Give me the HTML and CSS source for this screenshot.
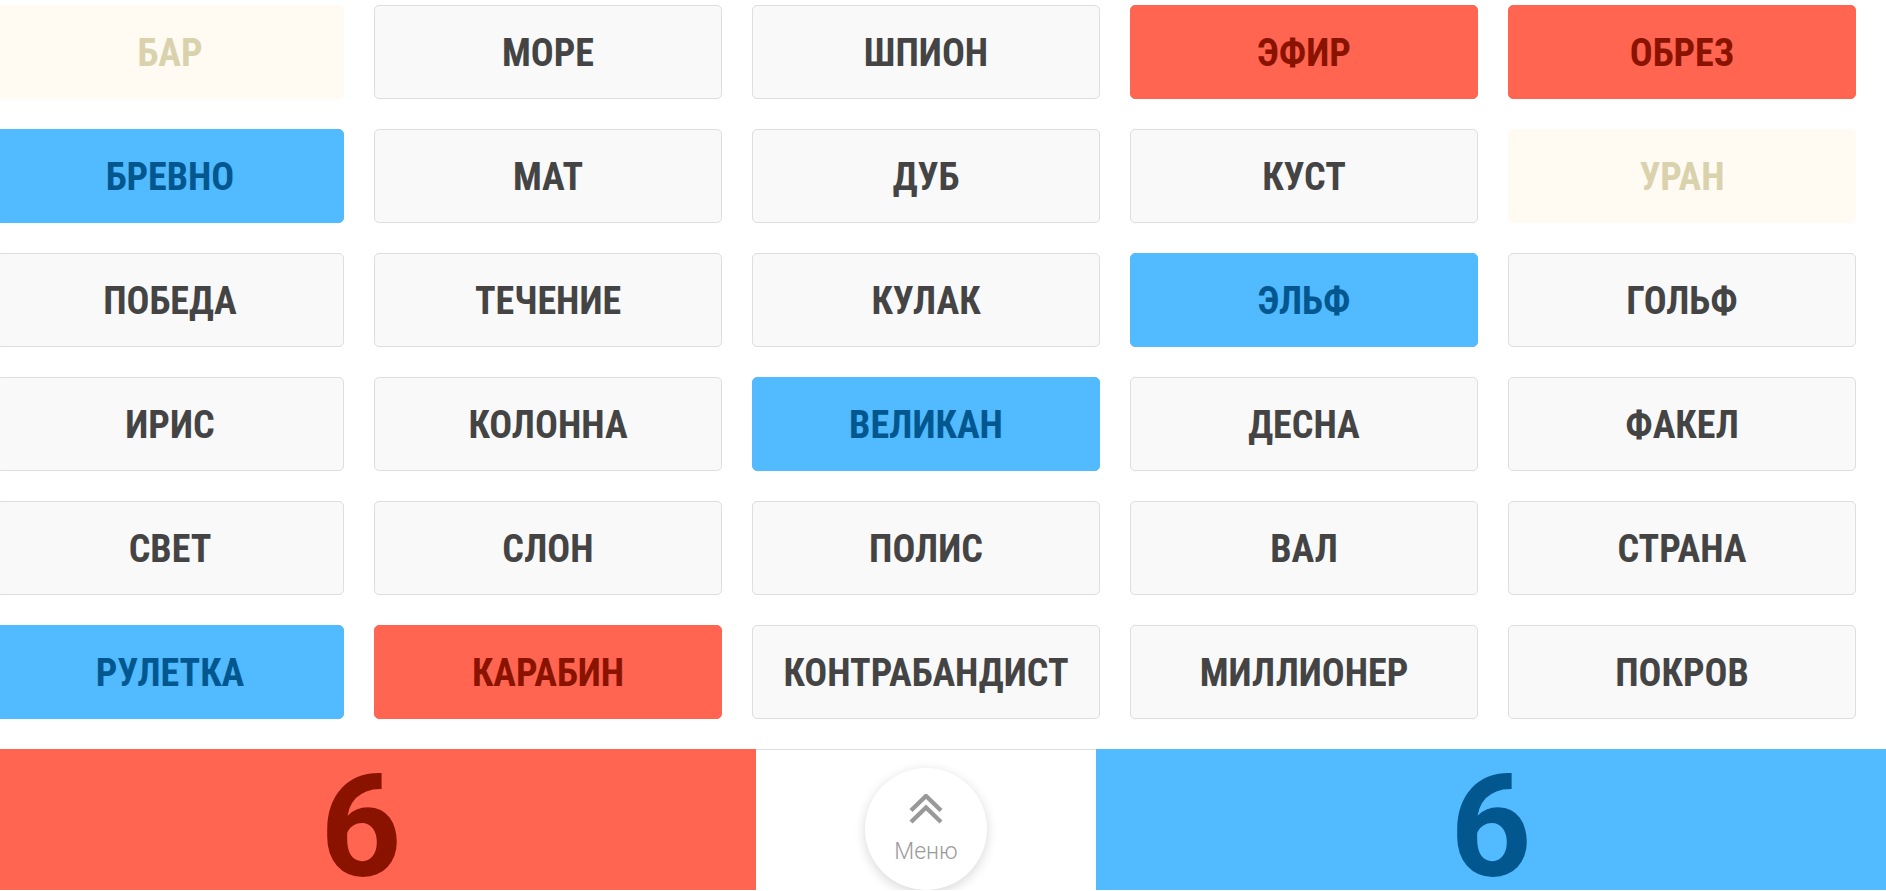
FILE: index.html
```html
<!DOCTYPE html>
<html lang="ru">
<head>
<meta charset="utf-8">
<title>Игра</title>
<link rel="stylesheet" href="styles.css">
</head>
<body>
<div class="page">
  <div class="board">
    <div class="card card-neutral">Бар</div>
    <div class="card card-plain">Море</div>
    <div class="card card-plain">Шпион</div>
    <div class="card card-red">Эфир</div>
    <div class="card card-red">Обрез</div>

    <div class="card card-blue">Бревно</div>
    <div class="card card-plain">Мат</div>
    <div class="card card-plain">Дуб</div>
    <div class="card card-plain">Куст</div>
    <div class="card card-neutral">Уран</div>

    <div class="card card-plain">Победа</div>
    <div class="card card-plain">Течение</div>
    <div class="card card-plain">Кулак</div>
    <div class="card card-blue">Эльф</div>
    <div class="card card-plain">Гольф</div>

    <div class="card card-plain">Ирис</div>
    <div class="card card-plain">Колонна</div>
    <div class="card card-blue">Великан</div>
    <div class="card card-plain">Десна</div>
    <div class="card card-plain">Факел</div>

    <div class="card card-plain">Свет</div>
    <div class="card card-plain">Слон</div>
    <div class="card card-plain">Полис</div>
    <div class="card card-plain">Вал</div>
    <div class="card card-plain">Страна</div>

    <div class="card card-blue">Рулетка</div>
    <div class="card card-red">Карабин</div>
    <div class="card card-plain">Контрабандист</div>
    <div class="card card-plain">Миллионер</div>
    <div class="card card-plain">Покров</div>
  </div>

  <div class="score-bar">
    <div class="score score-red">6</div>
    <div class="menu-area">
      <button class="menu-btn" type="button">
        <svg class="menu-icon" width="34" height="33" viewBox="0 0 34 33" aria-hidden="true">
          <path d="M2 16.5 L17 2 L32 16.5" fill="none" stroke="#999999" stroke-width="4.4"/>
          <path d="M2 28 L17 13.5 L32 28" fill="none" stroke="#999999" stroke-width="4.4"/>
        </svg>
        <span class="menu-label">Меню</span>
      </button>
    </div>
    <div class="score score-blue">6</div>
  </div>
</div>
</body>
</html>
```

FILE: styles.css
```css
html, body {
  margin: 0;
  padding: 0;
  background: #ffffff;
  overflow: hidden;
}

body {
  font-family: "Roboto Condensed", Roboto, "Liberation Sans", sans-serif;
}

.page {
  width: 1920px;
  margin-left: -34px;
}

.board {
  display: grid;
  grid-template-columns: repeat(5, 348px);
  grid-auto-rows: 94px;
  gap: 30px;
  padding: 5px 30px 30px;
}

.card {
  box-sizing: border-box;
  border: 1px solid transparent;
  border-radius: 5px;
  display: flex;
  align-items: center;
  justify-content: center;
  font-size: 38px;
  font-weight: 700;
  text-transform: uppercase;
  padding-top: 1px;
}

.card-plain {
  background: #f9f9f9;
  border-color: #dedede;
  color: #444444;
}

.card-neutral {
  background: #fffbf3;
  border-color: #fffbf3;
  color: #dad1ad;
}

.card-red {
  background: #ff6550;
  border-color: #ff6550;
  color: #8a1300;
}

.card-blue {
  background: #52baff;
  border-color: #52baff;
  color: #02578f;
}

.score-bar {
  display: flex;
  height: 141px;
  overflow: hidden;
}

.score {
  width: 790px;
  box-sizing: border-box;
  padding-top: 8px;
  text-align: center;
  font-family: Roboto, "Liberation Sans", sans-serif;
  font-size: 142px;
  font-weight: 700;
  line-height: 142px;
}

.score-red {
  background: #ff6550;
  color: #8a1300;
}

.score-blue {
  background: #52baff;
  color: #02578f;
}

.menu-area {
  width: 340px;
  box-sizing: border-box;
  border-top: 1px solid #dddddd;
  background: #ffffff;
  display: flex;
  justify-content: center;
}

.menu-btn {
  margin-top: 18px;
  width: 122px;
  height: 122px;
  flex-shrink: 0;
  border-radius: 50%;
  border: none;
  background: #ffffff;
  box-shadow: 0 3px 12px rgba(0, 0, 0, 0.16);
  display: flex;
  flex-direction: column;
  align-items: center;
  padding: 26px 0 0;
  cursor: pointer;
}

.menu-icon {
  display: block;
}

.menu-label {
  margin-top: 13px;
  font-family: Roboto, "Liberation Sans", sans-serif;
  font-weight: 300;
  font-size: 23px;
  line-height: 24px;
  color: #9a9a9a;
}
```
